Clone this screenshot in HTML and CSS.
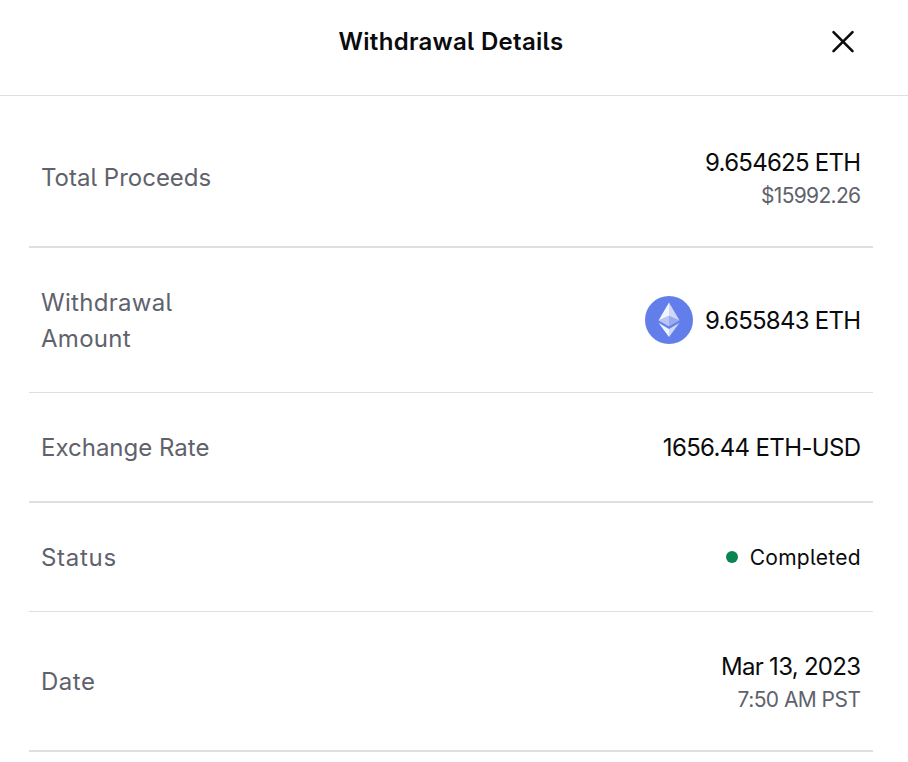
FILE: index.html
```
<!DOCTYPE html>
<html lang="en">
<head>
<meta charset="utf-8" />
<meta name="viewport" content="width=device-width, initial-scale=1" />
<title>Withdrawal Details</title>
<link rel="stylesheet" href="styles.css">
</head>
<body>
<header class="modal-header">
  <h1 class="title">Withdrawal Details</h1>
  <button class="close" type="button" aria-label="Close">
    <svg viewBox="0 0 24 24"><path d="M2.5 2.2 L21.5 21.2 M21.5 2.2 L2.5 21.2"/></svg>
  </button>
</header>

<main class="details">
  <div class="row row-tall">
    <div class="label">Total Proceeds</div>
    <div class="value">
      <div class="amount">9.654625 ETH</div>
      <div class="sub sub-usd">$15992.26</div>
    </div>
  </div>

  <div class="row row-amount">
    <div class="label label-narrow">Withdrawal Amount</div>
    <div class="value with-icon">
      <svg class="eth" viewBox="0 0 48 48">
        <circle cx="24" cy="24" r="24" fill="#627eea"/>
        <path d="M24 6.5 L13.5 24.4 L24 19.8 Z" fill="#fff" fill-opacity=".92"/>
        <path d="M24 6.5 L34.5 24.4 L24 19.8 Z" fill="#fff" fill-opacity=".7"/>
        <path d="M13.5 24.4 L24 19.8 V30.5 Z" fill="#fff" fill-opacity=".55"/>
        <path d="M34.5 24.4 L24 19.8 V30.5 Z" fill="#fff" fill-opacity=".35"/>
        <path d="M13.5 26.8 L24 33 V41 Z" fill="#fff" fill-opacity=".92"/>
        <path d="M34.5 26.8 L24 33 V41 Z" fill="#fff" fill-opacity=".7"/>
      </svg>
      <div class="amount">9.655843 ETH</div>
    </div>
  </div>

  <div class="row row-rate">
    <div class="label">Exchange Rate</div>
    <div class="value rate">1656.44 ETH-USD</div>
  </div>

  <div class="row row-status">
    <div class="label label-status">Status</div>
    <div class="value status"><span class="dot"></span>Completed</div>
  </div>

  <div class="row row-tall">
    <div class="label label-date">Date</div>
    <div class="value">
      <div class="date">Mar 13, 2023</div>
      <div class="sub sub-time">7:50 AM PST</div>
    </div>
  </div>
</main>
</body>
</html>
```
FILE: styles.css
```
*{box-sizing:border-box}
body{margin:0;background:#fff;color:#0a0b0d;font-family:Inter,"Liberation Sans",sans-serif;font-size:24px;line-height:36px;font-feature-settings:"cv05";overflow:hidden}

/* Header */
.modal-header{display:grid;grid-template-columns:1fr auto 1fr;align-items:center;height:96px;padding:0 53px 12px 47px;border-bottom:1px solid #dedfe0}
.title{grid-column:2;margin:0;font-size:24px;font-weight:560;line-height:36px;letter-spacing:.3px}
.close{justify-self:end;display:flex;padding:0;border:0;background:none}
.close svg{width:24px;height:24px;fill:none;stroke:#0a0b0d;stroke-width:2.6;stroke-linecap:round}

/* Rows */
.details{margin:0 35px 0 29px;padding-top:12px}
.row{display:flex;align-items:center;justify-content:space-between;padding:2px 12px 0;border-bottom:1px solid #dedfe0}
.row-tall{height:140px;border-bottom-width:2px}
.row-amount{height:145px}
.row-rate{height:110px;border-bottom-width:2px}
.row-status{height:109px}

.label{color:#5f626c;font-weight:380}
.label-narrow{width:150px;letter-spacing:.3px}
.label-status{letter-spacing:.7px}
.label-date{letter-spacing:.5px}

.value{text-align:right;font-weight:380}
.amount{letter-spacing:-.75px;padding-right:.75px}
.rate{letter-spacing:-.65px;padding-right:.6px}
.date{letter-spacing:-.72px;padding-right:.7px}
.sub{color:#5f626c;font-size:21px;line-height:30px;padding-right:.6px}
.sub-usd{letter-spacing:-.68px}
.sub-time{letter-spacing:-.55px}

.with-icon{display:flex;align-items:center;gap:12px}
.eth{width:48px;height:48px;margin-bottom:2px}

.status{display:flex;align-items:center;gap:12px;font-size:21px;letter-spacing:.3px}
.dot{width:12px;height:12px;margin-bottom:2px;border-radius:50%;background:#098551}
```
